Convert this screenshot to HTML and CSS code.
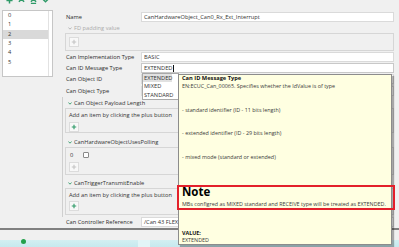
FILE: index.html
```html
<!DOCTYPE html>
<html>
<head>
<meta charset="utf-8">
<link rel="stylesheet" href="styles.css">
</head>
<body>
<div class="app">
  <div class="main">
    <aside class="left">
      <div class="toolbar">
        <svg class="tb-icon" viewBox="0 0 8 8"><path d="M4 0.5v7M0.5 4h7"/></svg>
        <svg class="tb-icon" viewBox="0 0 8 8"><path d="M1 5.5L4 2.5L7 5.5M1 2L7 2"/></svg>
        <svg class="tb-icon" viewBox="0 0 8 8"><path d="M1 5.5L4 2.5L7 5.5M1 7.5L7 7.5"/></svg>
        <svg class="tb-icon" viewBox="0 0 8 8"><path d="M1 2.5L4 5.5L7 2.5"/></svg>
      </div>
      <div class="list">
        <ul class="rows">
          <li>0</li>
          <li>1</li>
          <li class="sel">2</li>
          <li>3</li>
          <li>4</li>
          <li>5</li>
        </ul>
      </div>
    </aside>
    <section class="form">
      <div class="row row-name"><span class="label">Name</span><div class="field">CanHardwareObject_Can0_Rx_Ext_Interrupt</div></div>
      <div class="sec-head outer disabled"><svg class="chev" viewBox="0 0 4 3"><path d="M0.4 0.5L2 2.2L3.6 0.5"/></svg>FD padding value</div>
      <div class="box box-fd"><span class="plus disabled"><svg viewBox="0 0 8 8"><path d="M4 1v6M1 4h6"/></svg></span></div>
      <div class="row gap1"><span class="label">Can Implementation Type</span><div class="field">BASIC</div></div>
      <div class="row gap1"><span class="label">Can ID Message Type</span><div class="field focus">EXTENDED<span class="caret"></span></div></div>
      <div class="row gap1"><span class="label">Can Object ID</span><div class="field"></div></div>
      <div class="row gap2"><span class="label">Can Object Type</span><div class="field"></div></div>
      <div class="group">
        <div class="sec-head"><svg class="chev" viewBox="0 0 4 3"><path d="M0.4 0.5L2 2.2L3.6 0.5"/></svg>Can Object Payload Length</div>
        <div class="box box-a">
          <div class="hint">Add an item by clicking the plus button</div>
          <span class="plus"><svg viewBox="0 0 8 8"><path d="M4 1v6M1 4h6"/></svg></span>
        </div>
        <div class="sec-head sh-b"><svg class="chev" viewBox="0 0 4 3"><path d="M0.4 0.5L2 2.2L3.6 0.5"/></svg>CanHardwareObjectUsesPolling</div>
        <div class="box box-b">
          <div class="item">0<span class="check"></span></div>
          <span class="plus disabled"><svg viewBox="0 0 8 8"><path d="M4 1v6M1 4h6"/></svg></span>
        </div>
        <div class="sec-head sh-c"><svg class="chev" viewBox="0 0 4 3"><path d="M0.4 0.5L2 2.2L3.6 0.5"/></svg>CanTriggerTransmitEnable</div>
        <div class="box box-c">
          <div class="hint">Add an item by clicking the plus button</div>
          <span class="plus"><svg viewBox="0 0 8 8"><path d="M4 1v6M1 4h6"/></svg></span>
        </div>
      </div>
      <div class="row"><span class="label">Can Controller Reference</span><div class="field">/Can 43 FLEXCAN/Can/CanConfigSet/CanController_0</div></div>
    </section>
  </div>
  <div class="divider"></div>
  <div class="status"></div>
  <div class="taskbar"><span class="dot"></span><span class="tb-app"></span></div>
</div>

<div class="dropdown">
  <div class="dd-item sel">EXTENDED</div>
  <div class="dd-item">MIXED</div>
  <div class="dd-item">STANDARD</div>
</div>

<div class="tooltip">
  <div class="tt-title">Can ID Message Type</div>
  <div class="tt-line">EN:ECUC_Can_00065. Specifies whether the IdValue is of type</div>
  <div class="tt-line tt-s1">- standard identifier (ID - 11 bits length)</div>
  <div class="tt-line tt-s2">- extended identifier (ID - 29 bits length)</div>
  <div class="tt-line tt-s1">- mixed mode (standard or extended)</div>
  <div class="tt-note">Note</div>
  <div class="tt-line tt-mbs">MBs configred as MIXED standard and RECEIVE type will be treated as EXTENDED.</div>
  <div class="tt-value">VALUE:</div>
  <div class="tt-val">EXTENDED</div>
</div>

<div class="annot"></div>
</body>
</html>
```

FILE: styles.css
```css
* { box-sizing: border-box; margin: 0; padding: 0; }
html, body { width: 399px; height: 247px; overflow: hidden; }
body {
  background: #f0f0f0;
  font-family: "Open Sans", "Noto Sans", sans-serif;
  font-size: 5.7px;
  color: #2b2b2b;
  position: relative;
}
.app { display: flex; flex-direction: column; height: 247px; }
.main { display: flex; height: 228px; }

/* left panel */
.left { width: 60px; flex: none; display: flex; flex-direction: column; padding-left: 2px; }
.toolbar { height: 10px; display: flex; gap: 5px; padding-left: 4px; overflow: hidden; }
.tb-icon { width: 7px; height: 7px; margin-top: -3px; stroke: #2f9a68; stroke-width: 1.7; fill: none; flex: none; }
.list { width: 51px; height: 67px; background: #fff; border: 1px solid #c6c6c6; display: flex; }
.rows { list-style: none; width: 46px; height: 100%; border-right: 1px solid #e2e2e2; }
.rows li { height: 9.33px; line-height: 9.33px; padding-left: 5px; color: #333; }
.rows li.sel { background: #d9d9d9; }

/* form */
.form { flex: 1; display: flex; flex-direction: column; padding: 12px 5px 0 2px; }
.row { display: flex; height: 10px; align-items: center; padding-left: 4px; flex: none; }
.gap1 { margin-top: 1px; }
.gap2 { margin-top: 2px; }
.label { width: 75px; flex: none; white-space: nowrap; }
.field {
  flex: 1; height: 10px; background: #fff; border: 1px solid #dadada;
  padding-left: 2px; line-height: 8px; white-space: nowrap; overflow: hidden; color: #333;
  display: flex; align-items: center;
}
.field.focus { border-color: #c8c8c8; }
.caret { width: 1px; height: 7px; background: #111; margin-left: 0.5px; }

.sec-head { height: 10px; display: flex; align-items: center; padding-left: 5px; color: #333; flex: none; white-space: nowrap; }
.sec-head.outer { margin-top: 1px; padding-left: 6px; }
.sec-head.disabled { color: #ababab; }
.chev { width: 4px; height: 3px; margin-right: 2px; stroke: #2f9a68; stroke-width: 0.9; fill: none; flex: none; }
.disabled .chev { stroke: #b0b0b0; }
.sh-b { margin-top: 4px; }
.sh-c { margin-top: 3px; }

.box {
  border: 1px solid #d6d6d6; margin-left: 2px; display: flex; flex-direction: column;
  align-items: flex-start; flex: none;
}
.box-fd { margin-left: 3px; height: 18px; padding: 3px 0 0 3px; }
.box-a { height: 25px; padding: 2px 0 0 3px; }
.box-b { height: 28px; padding: 3px 0 0 4px; }
.box-c { height: 27px; padding: 2px 0 0 3px; }
.hint { line-height: 8px; height: 8px; white-space: nowrap; color: #333; }
.box-a .plus { margin-top: 3px; }
.box-b .plus { margin-top: 3px; margin-left: -1px; }
.box-c .plus { margin-top: 2px; }
.plus {
  width: 10px; height: 10px; background: #f8f8f8; border: 1px solid #dcdcdc;
  display: flex; align-items: center; justify-content: center;
}
.plus svg { width: 6px; height: 6px; stroke: #2f9a68; stroke-width: 1.5; fill: none; }
.plus.disabled svg { stroke: #c4c4c4; }
.item { height: 8px; line-height: 8px; display: flex; align-items: center; color: #333; }
.check { width: 6px; height: 6px; border: 1px solid #8a8a8a; background: #fff; margin-left: 10px; border-radius: 1px; }

.group { margin-top: 1px; border-left: 1px solid #cfcfcf; padding: 1px 0 2px 0; display: flex; flex-direction: column; flex: none; }

/* bottom */
.divider { height: 2px; background: #808080; flex: none; }
.status { height: 10px; flex: none; }
.taskbar { height: 7px; flex: none; background: linear-gradient(#d3eff2, #c6e9ee); position: relative; display: flex; }
.dot { width: 5px; height: 5px; border-radius: 50%; background: #22a04b; margin: -1px 0 0 21px; }
.tb-app { width: 12px; height: 7px; background: #e2f5f7; margin-left: 112px; }

/* overlays */
.dropdown {
  position: absolute; left: 142px; top: 73px; width: 37px; height: 27px;
  background: #fff; border: 1px solid #a9a9a9; color: #333;
}
.dd-item { height: 8.33px; line-height: 8.33px; padding-left: 1px; white-space: nowrap; }
.dd-item.sel { background: #e1e1e1; margin-right: 6px; }

.tooltip {
  position: absolute; left: 178px; top: 74px; width: 214px; height: 171px;
  background: #ffffe1; border: 1px solid #8c8c8c;
  box-shadow: 2px 2px 1px rgba(0, 0, 0, 0.3);
  padding: 0 3px; display: flex; flex-direction: column;
  font-size: 5.4px; color: #3a3a3a; line-height: 8px; white-space: nowrap;
}
.tt-title { font-weight: 700; color: #111; line-height: 7px; font-size: 5.7px; }
.tt-s1 { margin-top: 16px; }
.tt-s2 { margin-top: 15px; }
.tt-note { font-size: 11.5px; font-weight: 700; line-height: 12px; margin-top: 25px; color: #000; }
.tt-mbs { margin-top: 2px; }
.tt-value { margin-top: 22px; font-weight: 700; line-height: 7px; color: #111; }
.tt-val { line-height: 7px; }

.annot {
  position: absolute; left: 177px; top: 185px; width: 218px; height: 25px;
  border: 2px solid #e3202b;
}
```
